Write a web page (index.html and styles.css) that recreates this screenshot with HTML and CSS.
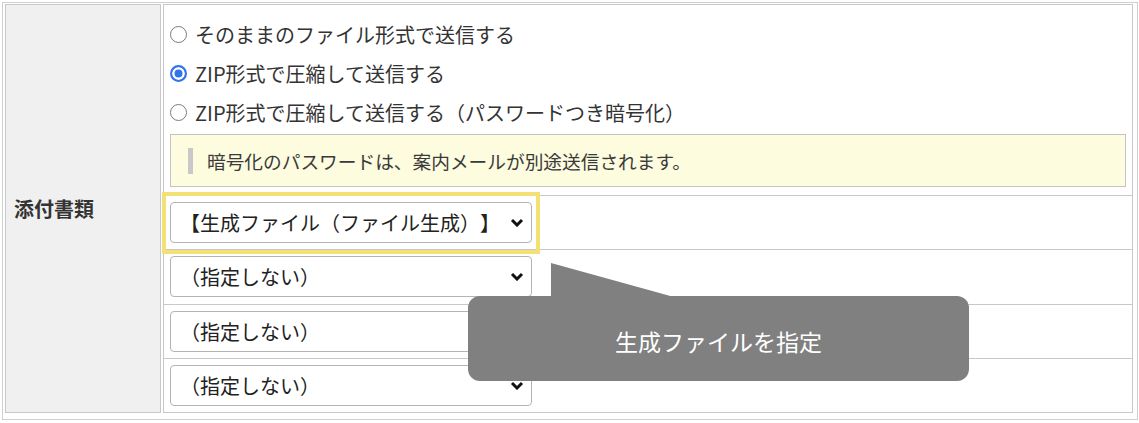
FILE: index.html
```html
<!DOCTYPE html>
<html lang="ja">
<head>
<meta charset="utf-8">
<title>添付書類</title>
<link rel="stylesheet" href="styles.css">
</head>
<body>
<div class="frame">
  <div class="form">
    <div class="label">添付書類</div>
    <div class="values">
      <div class="row opts">
        <label class="opt"><input type="radio" name="fmt" class="radio"><span>そのままのファイル形式で送信する</span></label>
        <label class="opt"><input type="radio" name="fmt" class="radio" checked><span>ZIP形式で圧縮して送信する</span></label>
        <label class="opt"><input type="radio" name="fmt" class="radio"><span>ZIP形式で圧縮して送信する（パスワードつき暗号化）</span></label>
        <div class="notice"><span class="bar"></span><span>暗号化のパスワードは、案内メールが別途送信されます。</span></div>
      </div>
      <div class="row sel-row">
        <div class="select-wrap">
          <select class="select"><option>【生成ファイル（ファイル生成）】</option></select>
          <svg class="chev" width="14" height="9" viewBox="0 0 14 9"><polyline points="2,2 7,7 12,2" fill="none" stroke="#111" stroke-width="3"/></svg>
        </div>
      </div>
      <div class="row sel-row">
        <div class="select-wrap">
          <select class="select"><option>（指定しない）</option></select>
          <svg class="chev" width="14" height="9" viewBox="0 0 14 9"><polyline points="2,2 7,7 12,2" fill="none" stroke="#111" stroke-width="3"/></svg>
        </div>
      </div>
      <div class="row sel-row">
        <div class="select-wrap">
          <select class="select"><option>（指定しない）</option></select>
          <svg class="chev" width="14" height="9" viewBox="0 0 14 9"><polyline points="2,2 7,7 12,2" fill="none" stroke="#111" stroke-width="3"/></svg>
        </div>
      </div>
      <div class="row sel-row">
        <div class="select-wrap">
          <select class="select"><option>（指定しない）</option></select>
          <svg class="chev" width="14" height="9" viewBox="0 0 14 9"><polyline points="2,2 7,7 12,2" fill="none" stroke="#111" stroke-width="3"/></svg>
        </div>
      </div>
    </div>
  </div>
</div>
<div class="highlight"></div>
<div class="callout">生成ファイルを指定</div>
</body>
</html>
```
FILE: styles.css
```css
html, body {
  margin: 0;
  padding: 0;
  background: #fff;
}
body {
  position: relative;
  width: 1139px;
  height: 423px;
  overflow: hidden;
  font-family: "Noto Sans CJK JP", "Noto Sans", sans-serif;
  color: #333;
  text-spacing-trim: space-all;
}
.frame {
  margin: 2px 0 0 2px;
  width: 1128px;
  border: 1px solid #cfcfcf;
  padding: 1px 4px 6px 2px;
}
.form {
  display: flex;
  gap: 2px;
  height: 409px;
}
.label {
  width: 146px;
  border: 1px solid #c8c8c8;
  background: #f0f0f0;
  display: flex;
  align-items: center;
  padding-left: 8px;
  font-size: 20px;
  font-weight: bold;
  color: #333;
}
.values {
  flex: 1;
  border: 1px solid #c8c8c8;
  display: flex;
  flex-direction: column;
}
.row + .row {
  border-top: 1px solid #c8c8c8;
}
.opts {
  height: 190px;
  box-sizing: border-box;
  padding: 10px 6px 0 6px;
}
.opt {
  display: flex;
  align-items: center;
  height: 39px;
  font-size: 20px;
  color: #333;
}
.radio {
  appearance: none;
  -webkit-appearance: none;
  width: 17px;
  height: 17px;
  margin: 0 8px 0 0;
  border: 1px solid #7a7a7a;
  border-radius: 50%;
  background: #fff;
  box-sizing: border-box;
  flex: none;
}
.radio:checked {
  border: 2px solid #3474ea;
  background: #3474ea;
  box-shadow: inset 0 0 0 2.5px #fff;
}
.notice {
  margin-top: 2px;
  height: 53px;
  box-sizing: border-box;
  border: 1px solid #c4c4c4;
  background: #fdfcdf;
  display: flex;
  align-items: center;
  padding-left: 17px;
  font-size: 18.7px;
  color: #3a3a3a;
}
.bar {
  width: 5px;
  height: 26px;
  background: #c8c8c8;
  margin-right: 14px;
}
.sel-row {
  flex: 1;
  display: flex;
  align-items: center;
  padding-left: 6px;
}
.select-wrap {
  position: relative;
  width: 362px;
  height: 41px;
}
.select {
  appearance: none;
  -webkit-appearance: none;
  width: 100%;
  height: 100%;
  box-sizing: border-box;
  border: 1px solid #b4b4b4;
  border-radius: 4px;
  background: #fff;
  padding: 0 30px 0 9px;
  font-family: "Noto Sans CJK JP", "Noto Sans", sans-serif;
  font-size: 20px;
  color: #222;
  margin: 0;
  text-spacing-trim: space-all;
}
.chev {
  position: absolute;
  right: 8px;
  top: 16px;
  pointer-events: none;
}
.highlight {
  position: absolute;
  left: 162px;
  top: 192px;
  width: 370px;
  height: 54px;
  border: 4px solid #f3e176;
}
.callout {
  position: absolute;
  left: 468px;
  top: 296px;
  width: 501px;
  height: 85px;
  border-radius: 12px;
  background: #808080;
  color: #fff;
  font-size: 23px;
  display: flex;
  align-items: center;
  justify-content: center;
  padding-top: 4px;
  box-sizing: border-box;
}
.callout::before {
  content: "";
  position: absolute;
  left: 83px;
  top: -33px;
  width: 123px;
  height: 34px;
  background: #808080;
  clip-path: polygon(0 0, 0 100%, 100% 100%);
}
```
